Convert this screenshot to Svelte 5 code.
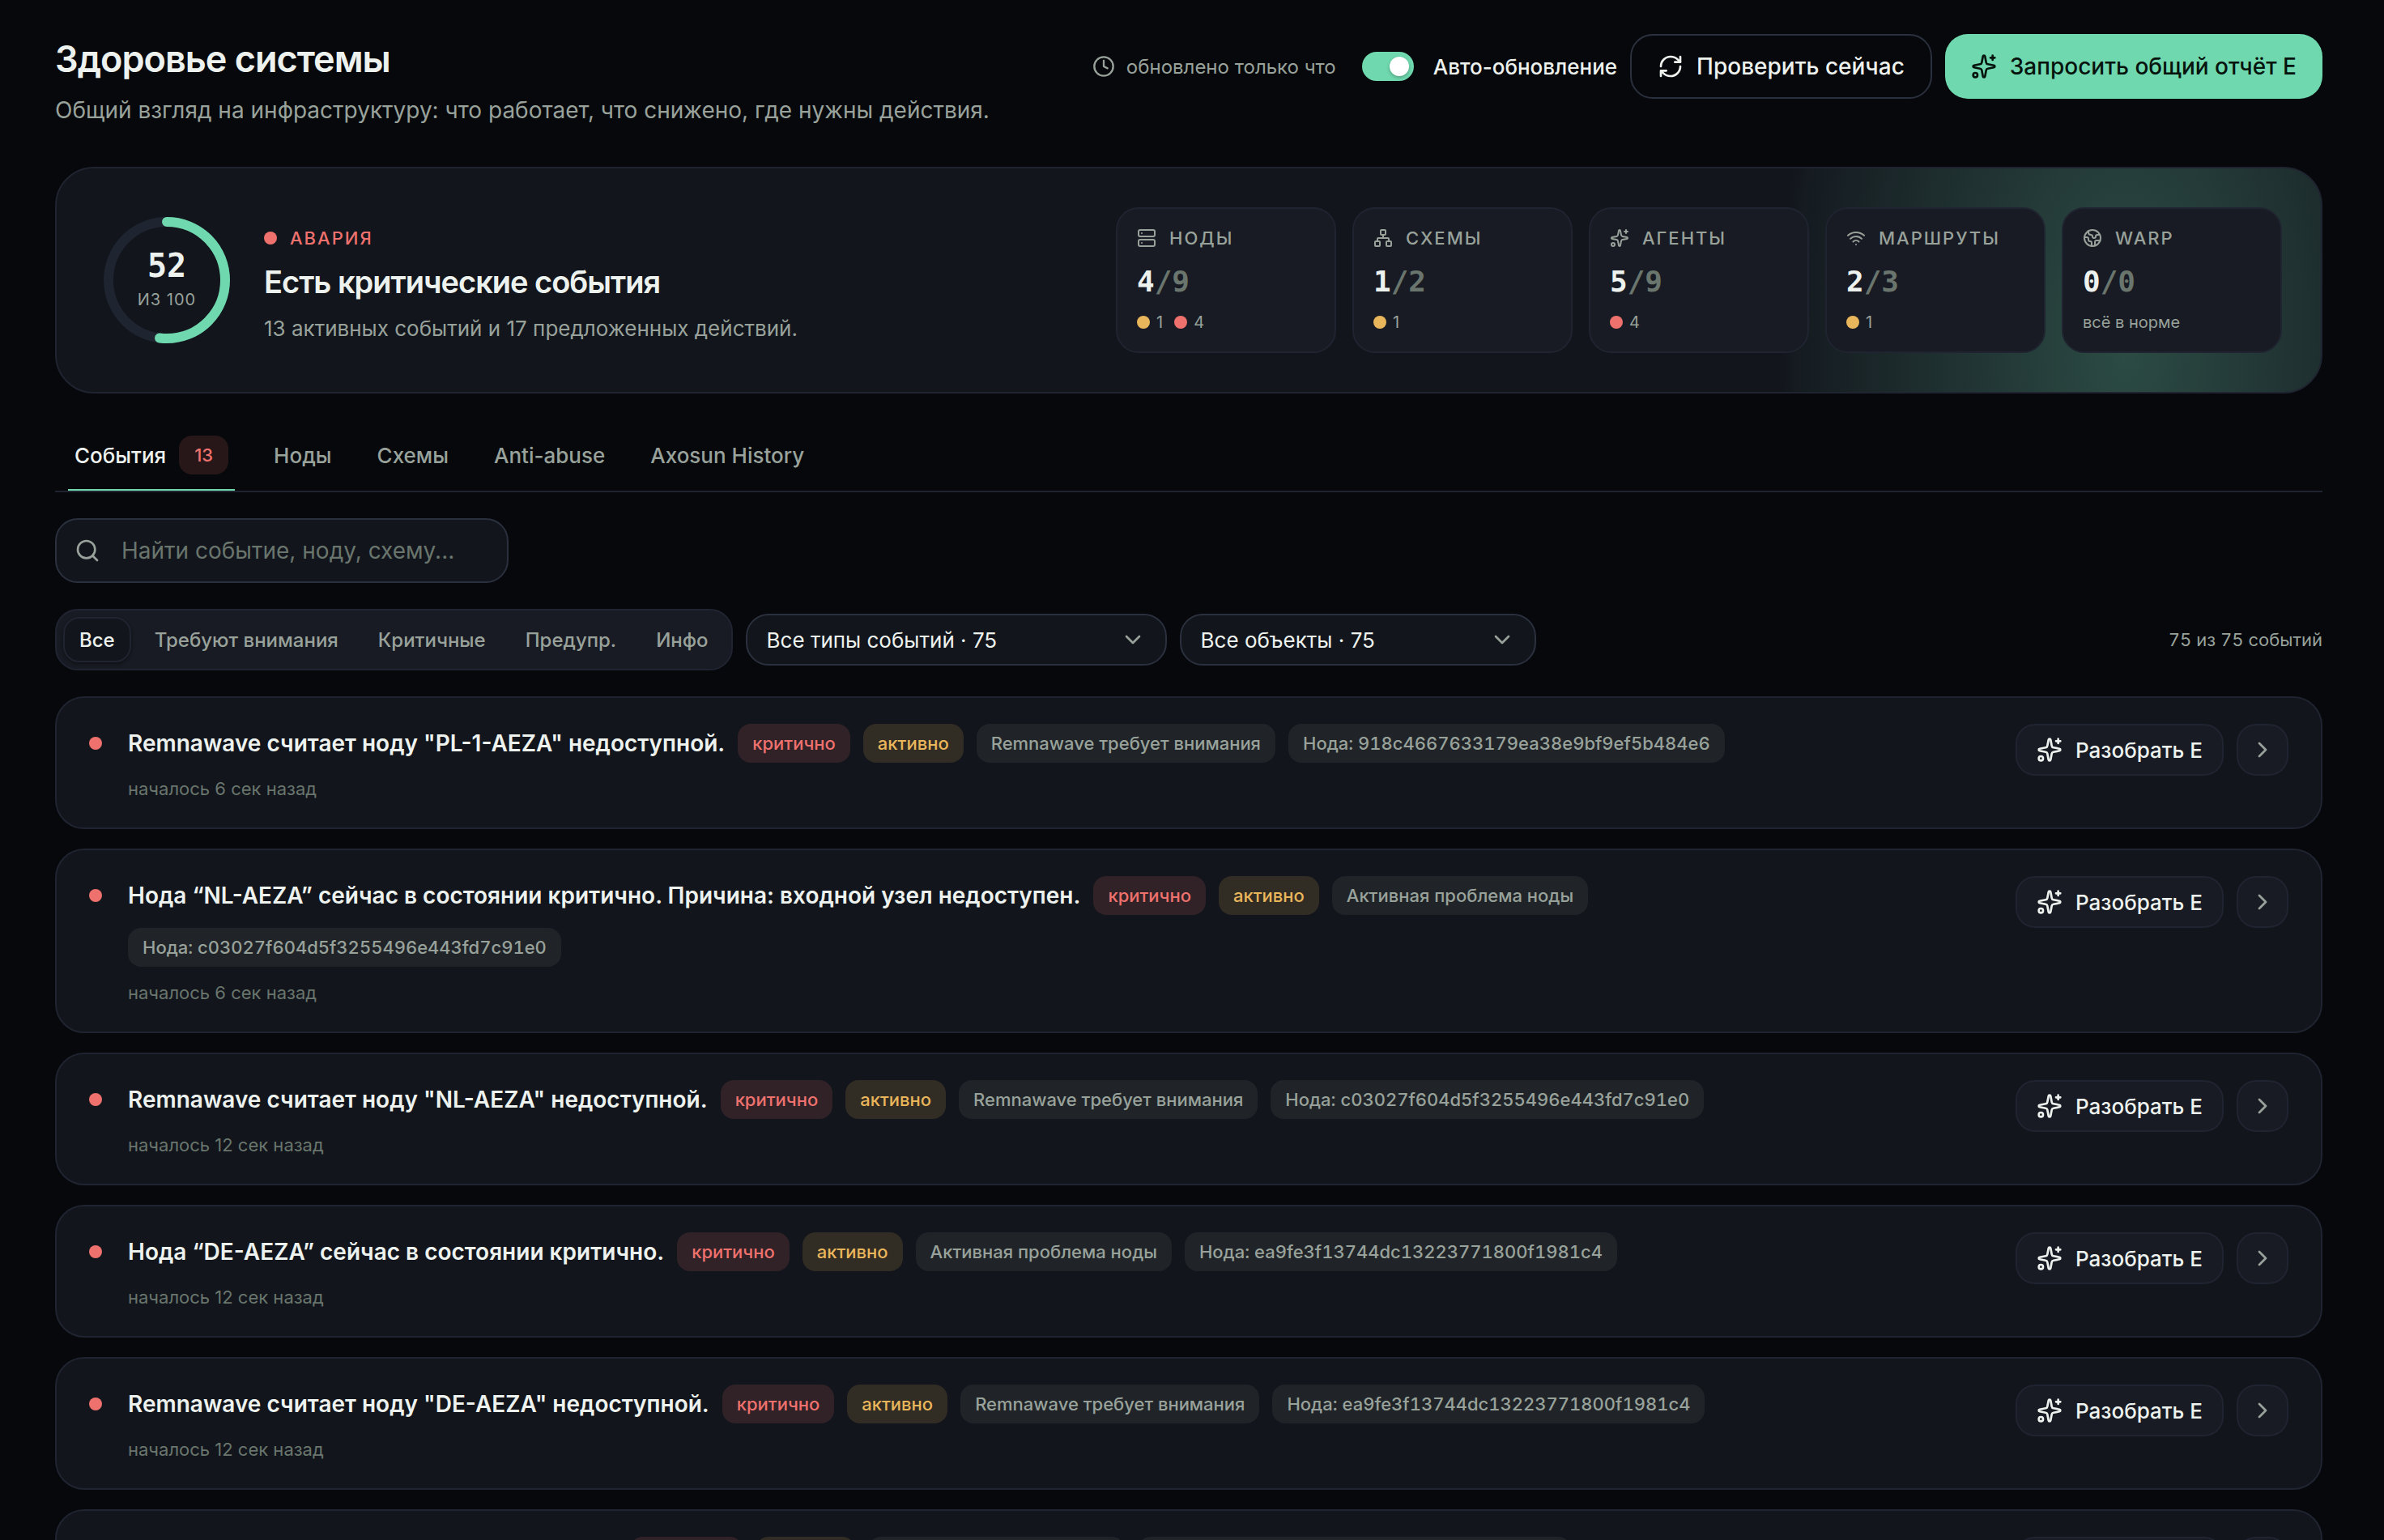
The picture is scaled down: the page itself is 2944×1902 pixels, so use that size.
<script>
  let query = $state("");
  let autoRefresh = $state(true);
  let activeTab = $state("События");
  let activeFilter = $state("Все");

  const score = 52;
  const tabs = [{ name: "События", count: 13 }, { name: "Ноды" }, { name: "Схемы" }, { name: "Anti-abuse" }, { name: "Axosun History" }];
  const filters = ["Все", "Требуют внимания", "Критичные", "Предупр.", "Инфо"];

  const tiles = [
    { icon: "server", name: "Ноды", ok: 4, total: 9, warn: 1, crit: 4 },
    { icon: "network", name: "Схемы", ok: 1, total: 2, warn: 1 },
    { icon: "sparkles", name: "Агенты", ok: 5, total: 9, crit: 4 },
    { icon: "wifi", name: "Маршруты", ok: 2, total: 3, warn: 1 },
    { icon: "globe", name: "WARP", ok: 0, total: 0 },
  ];

  const events = [
    {
      title: 'Remnawave считает ноду "PL-1-AEZA" недоступной.',
      tags: ["Remnawave требует внимания", "Нода: 918c4667633179ea38e9bf9ef5b484e6"],
      ago: "6 сек",
    },
    {
      title: "Нода “NL-AEZA” сейчас в состоянии критично. Причина: входной узел недоступен.",
      tags: ["Активная проблема ноды", "Нода: c03027f604d5f3255496e443fd7c91e0"],
      ago: "6 сек",
    },
    {
      title: 'Remnawave считает ноду "NL-AEZA" недоступной.',
      tags: ["Remnawave требует внимания", "Нода: c03027f604d5f3255496e443fd7c91e0"],
      ago: "12 сек",
    },
    {
      title: "Нода “DE-AEZA” сейчас в состоянии критично.",
      tags: ["Активная проблема ноды", "Нода: ea9fe3f13744dc13223771800f1981c4"],
      ago: "12 сек",
    },
    {
      title: 'Remnawave считает ноду "DE-AEZA" недоступной.',
      tags: ["Remnawave требует внимания", "Нода: ea9fe3f13744dc13223771800f1981c4"],
      ago: "12 сек",
    },
    {
      title: "Нода “FIN-AEZA” сейчас в состоянии сбоя.",
      tags: ["Активная проблема ноды", "Нода: 5b1e07c2a94f4d36b8e2c6f17d03a9e4"],
      ago: "12 сек",
    },
  ];
</script>

{#snippet icon(name)}
  <svg class="icon" viewBox="0 0 24 24" aria-hidden="true">
    {#if name === "server"}
      <rect x="2" y="2" width="20" height="8" rx="2" />
      <rect x="2" y="14" width="20" height="8" rx="2" />
      <path d="M6 6h.01M6 18h.01" />
    {:else if name === "network"}
      <rect x="16" y="16" width="6" height="6" rx="1" />
      <rect x="2" y="16" width="6" height="6" rx="1" />
      <rect x="9" y="2" width="6" height="6" rx="1" />
      <path d="M5 16v-3a1 1 0 0 1 1-1h12a1 1 0 0 1 1 1v3M12 12V8" />
    {:else if name === "sparkles"}
      <path
        d="M11.017 2.814a1 1 0 0 1 1.966 0l1.051 5.558a2 2 0 0 0 1.594 1.594l5.558 1.051a1 1 0 0 1 0 1.966l-5.558 1.051a2 2 0 0 0-1.594 1.594l-1.051 5.558a1 1 0 0 1-1.966 0l-1.051-5.558a2 2 0 0 0-1.594-1.594l-5.558-1.051a1 1 0 0 1 0-1.966l5.558-1.051a2 2 0 0 0 1.594-1.594z"
      />
      <path d="M20 2v4M22 4h-4" />
      <circle cx="4" cy="20" r="2" />
    {:else if name === "wifi"}
      <path d="M12 20h.01M2 8.82a15 15 0 0 1 20 0M5 12.859a10 10 0 0 1 14 0M8.5 16.429a5 5 0 0 1 7 0" />
    {:else if name === "globe"}
      <path d="M21.54 15H17a2 2 0 0 0-2 2v4.54" />
      <path d="M7 3.34V5a3 3 0 0 0 3 3a2 2 0 0 1 2 2c0 1.1.9 2 2 2a2 2 0 0 0 2-2c0-1.1.9-2 2-2h3.17" />
      <path d="M11 21.95V18a2 2 0 0 0-2-2a2 2 0 0 1-2-2v-1a2 2 0 0 0-2-2H2.05" />
      <circle cx="12" cy="12" r="10" />
    {:else if name === "clock"}
      <circle cx="12" cy="12" r="10" />
      <path d="M12 6v6l4 2" />
    {:else if name === "refresh"}
      <path d="M3 12a9 9 0 0 1 9-9 9.75 9.75 0 0 1 6.74 2.74L21 8" />
      <path d="M21 3v5h-5M21 12a9 9 0 0 1-9 9 9.75 9.75 0 0 1-6.74-2.74L3 16M8 16H3v5" />
    {:else if name === "search"}
      <circle cx="11" cy="11" r="8" />
      <path d="m21 21-4.34-4.34" />
    {:else if name === "down"}
      <path d="m6 9 6 6 6-6" />
    {:else if name === "right"}
      <path d="m9 18 6-6-6-6" />
    {/if}
  </svg>
{/snippet}

<main>
  <header>
    <div class="heading">
      <h1>Здоровье системы</h1>
      <p>Общий взгляд на инфраструктуру: что работает, что снижено, где нужны действия.</p>
    </div>
    <div class="actions">
      <span class="updated">{@render icon("clock")}обновлено только что</span>
      <label class="switch">
        <input type="checkbox" role="switch" bind:checked={autoRefresh} />
        Авто-обновление
      </label>
      <button class="btn outline">{@render icon("refresh")}Проверить сейчас</button>
      <button class="btn primary">{@render icon("sparkles")}Запросить общий отчёт E</button>
    </div>
  </header>

  <section class="hero">
    <div class="gauge">
      <svg viewBox="0 0 160 160" aria-hidden="true">
        <circle class="track" cx="80" cy="80" r="72" />
        <circle class="value" cx="80" cy="80" r="72" pathLength="100" stroke-dasharray="{score} 100" />
      </svg>
      <div class="gauge-text">
        <strong>{score}</strong>
        <span>из 100</span>
      </div>
    </div>
    <div class="summary">
      <div class="status"><i class="dot crit"></i>Авария</div>
      <h2>Есть критические события</h2>
      <p>13 активных событий и 17 предложенных действий.</p>
    </div>
    <div class="tiles">
      {#each tiles as tile}
        <div class="tile">
          <div class="tile-name">{@render icon(tile.icon)}{tile.name}</div>
          <div class="tile-value">{tile.ok}<span>/{tile.total}</span></div>
          <div class="tile-foot">
            {#if tile.warn}<span class="count"><i class="dot warn"></i>{tile.warn}</span>{/if}
            {#if tile.crit}<span class="count"><i class="dot crit"></i>{tile.crit}</span>{/if}
            {#if !tile.warn && !tile.crit}всё в норме{/if}
          </div>
        </div>
      {/each}
    </div>
  </section>

  <nav>
    {#each tabs as tab}
      <button class="tab" class:active={activeTab === tab.name} onclick={() => (activeTab = tab.name)}>
        {tab.name}
        {#if tab.count}<span class="badge">{tab.count}</span>{/if}
      </button>
    {/each}
  </nav>

  <label class="search">
    {@render icon("search")}
    <input type="text" aria-label="Поиск" placeholder="Найти событие, ноду, схему..." bind:value={query} />
  </label>

  <div class="filters">
    <div class="segmented">
      {#each filters as filter}
        <button class:active={activeFilter === filter} onclick={() => (activeFilter = filter)}>{filter}</button>
      {/each}
    </div>
    <div class="select types">
      <select aria-label="Типы событий"><option>Все типы событий · 75</option></select>
      {@render icon("down")}
    </div>
    <div class="select objects">
      <select aria-label="Объекты"><option>Все объекты · 75</option></select>
      {@render icon("down")}
    </div>
    <span class="total">75 из 75 событий</span>
  </div>

  <div class="events">
    {#each events as event}
      <article>
        <i class="dot crit"></i>
        <div class="body">
          <div class="line">
            <h3>{event.title}</h3>
            <span class="tag crit">критично</span>
            <span class="tag warn">активно</span>
            {#each event.tags as tag}
              <span class="tag">{tag}</span>
            {/each}
          </div>
          <p>началось {event.ago} назад</p>
        </div>
        <button class="analyze">{@render icon("sparkles")}Разобрать E</button>
        <button class="open" aria-label="Открыть">{@render icon("right")}</button>
      </article>
    {/each}
  </div>
</main>

<style>
  :global(html),
  :global(body) {
    height: 100%;
  }
  :global(body) {
    margin: 0;
    background: #07080c;
    overflow: hidden;
  }
  * {
    box-sizing: border-box;
  }
  main {
    padding: 42px 76px 0 68px;
    font-family: Inter, "Noto Sans", sans-serif;
    font-size: 26px;
    color: #edf2ee;
  }
  h1,
  h2,
  h3,
  p {
    margin: 0;
  }
  button,
  input,
  select {
    font: inherit;
    color: inherit;
    margin: 0;
  }
  button {
    display: flex;
    align-items: center;
    border: 0;
    background: none;
    cursor: pointer;
  }
  .icon {
    flex: none;
    width: 32px;
    height: 32px;
    fill: none;
    stroke: currentColor;
    stroke-width: 2;
    stroke-linecap: round;
    stroke-linejoin: round;
  }
  .dot {
    flex: none;
    width: 16px;
    height: 16px;
    border-radius: 50%;
  }
  .dot.crit {
    background: #ef716e;
  }
  .dot.warn {
    background: #e9b65b;
  }

  header {
    display: flex;
    justify-content: space-between;
    align-items: flex-start;
  }
  h1 {
    font-size: 45px;
    line-height: 62px;
    font-weight: 600;
    letter-spacing: -1px;
  }
  .heading p {
    margin-top: 14px;
    font-size: 28px;
    line-height: 36px;
    color: #98a29b;
  }
  .actions {
    display: flex;
    align-items: center;
    gap: 16px;
  }
  .updated {
    display: flex;
    align-items: center;
    gap: 14px;
    margin-right: 16px;
    font-size: 24px;
    color: #98a29b;
  }
  .updated .icon {
    width: 28px;
    height: 28px;
  }
  .switch {
    display: flex;
    align-items: center;
    gap: 24px;
    font-weight: 500;
  }
  .switch input {
    appearance: none;
    display: flex;
    align-items: center;
    width: 64px;
    height: 36px;
    padding: 0 6px;
    border-radius: 18px;
    background: #2a303d;
  }
  .switch input:checked {
    justify-content: flex-end;
    background: #6fd8ae;
  }
  .switch input::before {
    content: "";
    width: 24px;
    height: 24px;
    border-radius: 50%;
    background: #fff;
    box-shadow: 0 2px 4px rgba(0, 0, 0, 0.25);
  }
  .btn {
    height: 80px;
    padding: 0 32px;
    gap: 16px;
    border-radius: 28px;
    font-size: 28px;
    font-weight: 500;
  }
  .btn.outline {
    border: 2px solid #2a303d;
  }
  .btn.primary {
    background: #6fd8ae;
    color: #07140e;
  }

  .hero {
    display: flex;
    align-items: center;
    margin-top: 52px;
    padding: 48px;
    border: 2px solid #1f2430;
    border-radius: 48px;
    background:
      radial-gradient(430px 800px at calc(100% - 240px) 80%, rgba(111, 216, 174, 0.28), rgba(111, 216, 174, 0.03) 95%, transparent), #12151c;
  }
  .gauge {
    display: grid;
    flex: none;
    place-items: center;
    width: 160px;
    margin-left: 8px;
  }
  .gauge > * {
    grid-area: 1 / 1;
  }
  .gauge svg {
    width: 160px;
    height: 160px;
    transform: rotate(-90deg);
  }
  .gauge circle {
    fill: none;
    stroke-width: 12;
    stroke-linecap: round;
  }
  .gauge .track {
    stroke: #1e2430;
  }
  .gauge .value {
    stroke: #6fd8ae;
  }
  .gauge-text {
    display: flex;
    flex-direction: column;
    align-items: center;
    gap: 8px;
    padding-bottom: 4px;
  }
  .gauge-text strong {
    font-family: "DejaVu Sans Mono", monospace;
    font-size: 40px;
    line-height: 44px;
    font-weight: 700;
  }
  .gauge-text span {
    font-size: 20px;
    line-height: 24px;
    letter-spacing: 1px;
    text-transform: uppercase;
    color: #98a29b;
  }
  .summary {
    flex: 1;
    margin-left: 40px;
    padding-top: 12px;
  }
  .status {
    display: flex;
    align-items: center;
    gap: 16px;
    font-size: 22px;
    line-height: 28px;
    font-weight: 500;
    letter-spacing: 2px;
    text-transform: uppercase;
    color: #ef716e;
  }
  h2 {
    margin-top: 14px;
    font-size: 38px;
    line-height: 52px;
    font-weight: 600;
    letter-spacing: -1px;
  }
  .summary p {
    margin-top: 14px;
    font-size: 26px;
    line-height: 36px;
    color: #98a29b;
  }
  .tiles {
    display: flex;
    gap: 20px;
  }
  .tile {
    width: 272px;
    padding: 24px 24px 22px;
    border: 2px solid #1f2430;
    border-radius: 28px;
    background: #181b23;
  }
  .tile-name {
    display: flex;
    align-items: center;
    gap: 16px;
    font-size: 22px;
    line-height: 24px;
    font-weight: 500;
    letter-spacing: 2px;
    text-transform: uppercase;
    color: #98a29b;
  }
  .tile-name .icon {
    width: 24px;
    height: 24px;
  }
  .tile-value {
    margin-top: 14px;
    font-family: "DejaVu Sans Mono", monospace;
    font-size: 36px;
    line-height: 56px;
    font-weight: 700;
  }
  .tile-value span {
    color: #69756d;
  }
  .tile-foot {
    display: flex;
    gap: 14px;
    margin-top: 8px;
    font-size: 20px;
    line-height: 28px;
    color: #98a29b;
  }
  .count {
    display: flex;
    align-items: center;
    gap: 8px;
  }

  nav {
    display: flex;
    gap: 40px;
    margin-top: 32px;
    padding: 0 16px;
    border-bottom: 2px solid #1f2430;
  }
  .tab {
    height: 88px;
    padding: 2px 8px 0;
    gap: 16px;
    border-bottom: 2px solid transparent;
    font-weight: 500;
    color: #98a29b;
  }
  .tab.active {
    border-color: #6fd8ae;
    color: #edf2ee;
  }
  .badge {
    padding: 0 19px;
    border-radius: 16px;
    background: #271718;
    font-size: 22px;
    line-height: 48px;
    color: #ef716e;
  }

  .search {
    display: flex;
    align-items: center;
    width: 560px;
    height: 80px;
    margin-top: 32px;
    padding: 0 22px;
    gap: 26px;
    border: 2px solid #2a303d;
    border-radius: 28px;
    background: #12151c;
    font-size: 28px;
    color: #98a29b;
  }
  .search input {
    flex: 1;
    min-width: 0;
    padding: 0;
    border: 0;
    outline: 0;
    background: none;
    color: #edf2ee;
  }
  .search input::placeholder {
    color: #69756d;
    opacity: 1;
  }

  .filters {
    display: flex;
    align-items: center;
    gap: 16px;
    margin-top: 32px;
  }
  .segmented {
    display: flex;
    gap: 9px;
    padding: 8px;
    border: 2px solid #1f2430;
    border-radius: 28px;
    background: #181b23;
  }
  .segmented button {
    height: 56px;
    padding: 0 18px;
    border: 2px solid transparent;
    border-radius: 20px;
    font-size: 24px;
    font-weight: 500;
    color: #98a29b;
  }
  .segmented .active {
    border-color: #1f2430;
    background: #12151c;
    box-shadow: 0 2px 4px rgba(0, 0, 0, 0.4);
    color: #edf2ee;
  }
  .select {
    display: grid;
    align-items: center;
  }
  .select > * {
    grid-area: 1 / 1;
  }
  .select.types {
    width: 520px;
  }
  .select.objects {
    width: 440px;
  }
  .select select {
    appearance: none;
    height: 64px;
    padding: 0 24px;
    border: 2px solid #2a303d;
    border-radius: 28px;
    background: #12151c;
  }
  .select .icon {
    justify-self: end;
    margin-right: 26px;
    color: #98a29b;
    pointer-events: none;
  }
  .total {
    margin-left: auto;
    font-size: 22px;
    font-variant-numeric: tabular-nums;
    color: #98a29b;
  }

  .events {
    display: flex;
    flex-direction: column;
    gap: 24px;
    margin-top: 32px;
  }
  article {
    display: flex;
    align-items: flex-start;
    padding: 32px 40px;
    border: 2px solid #1f2430;
    border-radius: 36px;
    background: #12151c;
  }
  article > .dot {
    margin-top: 16px;
  }
  .body {
    flex: 1;
    margin: 0 32px;
  }
  .line {
    display: flex;
    flex-wrap: wrap;
    gap: 16px;
  }
  h3 {
    font-size: 28px;
    line-height: 48px;
    font-weight: 600;
  }
  .tag {
    padding: 0 18px;
    border-radius: 16px;
    background: #202428;
    font-size: 22px;
    line-height: 48px;
    font-weight: 500;
    font-variant-numeric: tabular-nums;
    color: #98a29b;
  }
  .tag.crit {
    background: #302227;
    color: #ef716e;
  }
  .tag.warn {
    background: #312c24;
    color: #e9b65b;
  }
  .body p {
    margin-top: 16px;
    font-size: 22px;
    line-height: 32px;
    color: #69756d;
  }
  .analyze,
  .open {
    height: 64px;
    border: 2px solid #1f2430;
    border-radius: 24px;
    background: #181b23;
  }
  .analyze {
    padding: 0 24px;
    gap: 16px;
    font-weight: 500;
  }
  .open {
    justify-content: center;
    width: 64px;
    margin-left: 16px;
    padding: 0;
    color: #98a29b;
  }
</style>
